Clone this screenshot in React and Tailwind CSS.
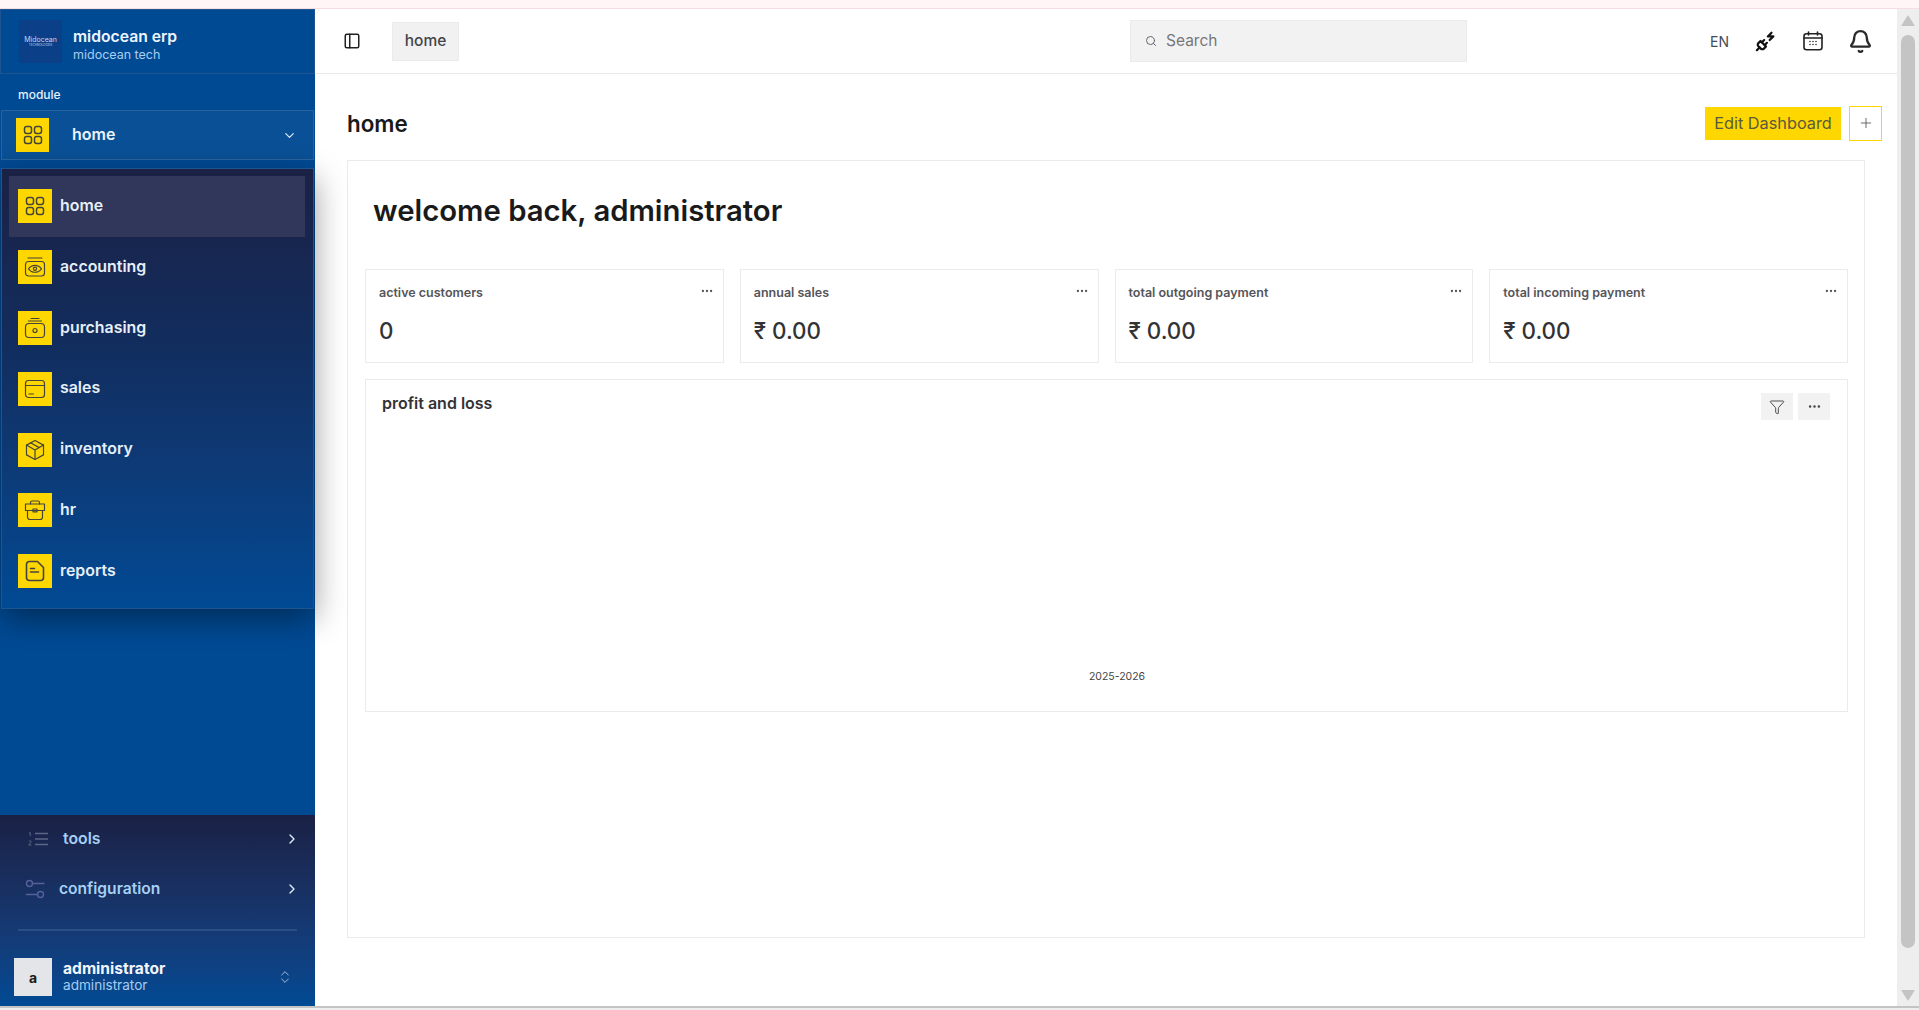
import { PanelLeft, ChevronDown, ChevronRight, ChevronsUpDown, Search, PlugZap, Bell, Plus, Funnel, Ellipsis } from "lucide-react";

const Svg = ({ className = "w-[24px] h-[24px]", children, sw = 1.5 }) => (
  <svg viewBox="0 0 24 24" className={className} fill="none" stroke="currentColor" strokeWidth={sw} strokeLinecap="round" strokeLinejoin="round">
    {children}
  </svg>
);

const HomeIcon = () => (
  <Svg>
    <rect x="3.500" y="3.500" width="7" height="7" rx="2.200" />
    <rect x="13.500" y="3.500" width="7" height="7" rx="2.200" />
    <rect x="3.500" y="13.500" width="7" height="7" rx="2.200" />
    <rect x="13.500" y="13.500" width="7" height="7" rx="2.200" />
  </Svg>
);

const AccountingIcon = () => (
  <Svg sw={1.200}>
    <rect x="2.500" y="6.500" width="19" height="14.500" rx="3" />
    <path d="M5 3h14" />
    <path d="M5.500 13.800c3.500-4.600 9.500-4.600 13 0-3.500 4.600-9.500 4.600-13 0z" />
    <circle cx="12" cy="13.800" r="1.600" />
  </Svg>
);

const PurchasingIcon = () => (
  <Svg sw={1.200}>
    <rect x="2.500" y="7.500" width="19" height="14" rx="3.500" />
    <path d="M8 2.500h8M5.500 5h13" />
    <circle cx="12" cy="14.500" r="2" />
  </Svg>
);

const SalesIcon = () => (
  <Svg sw={1.200}>
    <rect x="2.500" y="3.500" width="19" height="17" rx="3" />
    <path d="M2.500 8.500h19M6 17h4.500" />
  </Svg>
);

const InventoryIcon = () => (
  <Svg sw={1.200}>
    <path d="M12 2.500l8.500 4.600v9.800L12 21.500l-8.500-4.600V7.100z" />
    <path d="M3.500 7.100L12 12l8.500-5.100M12 12v9.500M7.500 4.800l8.800 4.800" />
  </Svg>
);

const HrIcon = () => (
  <Svg sw={1.200}>
    <path d="M2.500 6h19v6.500h-19zM4.500 12.500V19a2.500 2.500 0 0 0 2.500 2.500h10a2.500 2.500 0 0 0 2.500-2.500v-6.500" />
    <path d="M7.500 6V4.500a1.500 1.500 0 0 1 1.500-1.500h6a1.500 1.500 0 0 1 1.500 1.500V6" />
    <rect x="10" y="11" width="4" height="2.800" />
  </Svg>
);

const ReportsIcon = () => (
  <Svg sw={1.600}>
    <path d="M6.500 2.500h8l6 6v10a3 3 0 0 1-3 3h-11a3 3 0 0 1-3-3v-13a3 3 0 0 1 3-3z" />
    <path d="M7.500 9.500h4M7.500 13h8" />
  </Svg>
);

const ToolsIcon = () => (
  <svg viewBox="0 0 20 14" className="w-[20px] h-[14px]" fill="none" stroke="currentColor" strokeWidth="1.300">
    <path d="M7 1.500h13M7 7h13M7 12.500h13" />
    <path d="M1 1.200l1.200-.7v3.500M.8 9.500c.6-1 2.600-.8 2.400.5-.1.800-2.400 1.700-2.400 3h2.600" strokeWidth="1" />
  </svg>
);

const ConfigIcon = () => (
  <svg viewBox="0 0 20 20" className="w-[20px] h-[20px]" fill="none" stroke="currentColor" strokeWidth="1.400" strokeLinecap="round">
    <circle cx="4.500" cy="4.500" r="3" />
    <path d="M7.500 4.500H19" />
    <circle cx="15.500" cy="15.500" r="3" />
    <path d="M1.500 15.500h11" />
  </svg>
);

const CalendarIcon = () => (
  <svg viewBox="0 0 20 20" className="w-[20px] h-[20px]" fill="none" stroke="currentColor" strokeWidth="1.600" strokeLinecap="round" strokeLinejoin="round">
    <rect x="1" y="2.800" width="18" height="16" rx="2.500" />
    <path d="M1 7h18M5.500 1v3M14.500 1v3" />
    <path d="M7 10.500h.01M10 10.500h.01M13 10.500h.01M7 13.500h.01M10 13.500h.01M13 13.500h.01" strokeWidth="1.500" />
  </svg>
);

const modules = [
  { name: "home", Icon: HomeIcon, active: true },
  { name: "accounting", Icon: AccountingIcon },
  { name: "purchasing", Icon: PurchasingIcon },
  { name: "sales", Icon: SalesIcon },
  { name: "inventory", Icon: InventoryIcon },
  { name: "hr", Icon: HrIcon },
  { name: "reports", Icon: ReportsIcon },
];

const stats = [
  { label: "active customers", value: "0" },
  { label: "annual sales", value: "₹ 0.00" },
  { label: "total outgoing payment", value: "₹ 0.00" },
  { label: "total incoming payment", value: "₹ 0.00" },
];

function ModuleMenu() {
  return (
    <div className="absolute left-[1px] top-[159px] w-[313px] h-[441px] border border-[#1e5590] bg-gradient-to-b from-[#1a2145] via-[#112d5e] via-40% to-[#004a94] pl-[7px] pr-[8px] pt-[7px] shadow-[0_10px_30px_rgba(0,0,0,0.4)] z-10">
      {modules.map(({ name, Icon, active }) => (
        <div
          key={name}
          className={`flex items-center h-[60.800px] pl-[9px] gap-[8px] text-[15.900px] font-semibold text-[#e6effa] ${active ? "bg-[#30375a]" : ""}`}
        >
          <div className="w-[34px] h-[34px] bg-[#ffd700] flex items-center justify-center text-[#45453a]">
            <Icon />
          </div>
          <span className="mt-[-1px]">{name}</span>
        </div>
      ))}
    </div>
  );
}

function Sidebar() {
  return (
    <aside className="relative w-[315px] shrink-0 flex flex-col bg-[#004a94]">
      <div className="flex items-center h-[65px] pl-[18px] gap-[11px] border border-[#1e5590]">
        <div className="w-[43px] h-[43px] bg-[#0b3f87] flex flex-col items-center justify-center text-[#c5d6ee] leading-none">
          <span className="text-[7px]">Midocean</span>
          <span className="text-[3px] mt-[1px]">TECHNOLOGIES</span>
        </div>
        <div className="flex flex-col pt-[7px]">
          <span className="text-[15.700px] leading-[18px] font-semibold text-[#eef5ff]">midocean erp</span>
          <span className="text-[12.500px] leading-[17px] text-[#a8cdf2]">midocean tech</span>
        </div>
      </div>
      <div className="h-[36px] pl-[18px] pt-[13px] text-[12px] leading-[16px] font-medium text-[#e6f0fc]">module</div>
      <div className="mx-[1px] h-[50px] flex items-center pl-[14px] pr-[16px] border border-[#2a649f] bg-[#0a5096]">
        <div className="w-[33px] h-[34px] bg-[#ffd700] flex items-center justify-center text-[#45453a]">
          <HomeIcon />
        </div>
        <span className="ml-[23px] mt-[-3px] flex-1 text-[16px] font-semibold text-[#eaf2fc]">home</span>
        <ChevronDown className="w-[15px] h-[15px] text-[#dbe8f7]" />
      </div>
      <ModuleMenu />
      <div className="flex-1" />
      <div className="h-[191px] bg-gradient-to-b from-[#1a2145] to-[#004a94] flex flex-col">
        <div className="flex items-center h-[50px] mt-[-1px] pl-[28px] pr-[15px] text-[#a7d0f5] font-semibold text-[15.800px]">
          <span className="text-[#5b6685]"><ToolsIcon /></span>
          <span className="ml-[15px] flex-1">tools</span>
          <ChevronRight className="w-[16px] h-[16px] text-[#e3edf8]" />
        </div>
        <div className="flex items-center h-[50px] pl-[25px] pr-[15px] text-[#a7d0f5] font-semibold text-[15.600px]">
          <span className="text-[#55619b]"><ConfigIcon /></span>
          <span className="ml-[14px] flex-1">configuration</span>
          <ChevronRight className="w-[16px] h-[16px] text-[#e3edf8]" />
        </div>
        <div className="mx-[18px] mt-[15px] h-[2px] bg-[#2a4f84]" />
        <div className="flex items-center pl-[14px] pr-[22px] mt-[27px]">
          <div className="w-[38px] h-[38px] bg-[#e4e5e9] flex items-center justify-center text-[14px] font-bold text-[#1a1a1a]">a</div>
          <div className="ml-[11px] flex-1 flex flex-col mt-[-1px]">
            <span className="text-[15.600px] leading-[17px] font-bold text-[#f2f6fc]">administrator</span>
            <span className="text-[13.600px] leading-[16px] text-[#a4cdf3]">administrator</span>
          </div>
          <ChevronsUpDown className="w-[16px] h-[16px] text-[#b8cfe8]" strokeWidth={1.300} />
        </div>
      </div>
    </aside>
  );
}

function Topbar() {
  return (
    <header className="h-[65px] shrink-0 border-b border-[#e9e9e9] flex items-center pl-[28px] pr-[24px]">
      <PanelLeft className="w-[18px] h-[18px] text-[#222]" strokeWidth={2} />
      <div className="ml-[31px] w-[67px] h-[39px] bg-[#f1f1f1] border border-[#ebebeb] flex items-center justify-center text-[15.500px] font-medium text-[#44444a]">home</div>
      <div className="ml-[671px] w-[337px] h-[42px] bg-[#f2f2f2] border border-[#ebebeb] flex items-center pl-[14px] gap-[9px] text-[15.500px] text-[#77777a]">
        <Search className="w-[12px] h-[12px] text-[#666]" />
        Search
      </div>
      <div className="flex-1" />
      <span className="text-[14px] text-[#444c58] w-[18px] ml-[-1px]">EN</span>
      <PlugZap className="ml-[27px] w-[22px] h-[22px] text-[#111]" strokeWidth={2.400} />
      <span className="ml-[26px] text-[#222]"><CalendarIcon /></span>
      <Bell className="ml-[25px] w-[25px] h-[25px] text-[#2a2a2a]" strokeWidth={2.200} />
    </header>
  );
}

function StatCard({ label, value }) {
  return (
    <div className="flex-1 h-[94px] border border-[#ebebeb] pl-[13px] pr-[8px] pt-[14px] relative">
      <div className="text-[12.500px] leading-[18px] font-semibold text-[#55555a]">{label}</div>
      <div className="mt-[14px] text-[22.400px] leading-[30px] font-medium text-[#333336]">{value}</div>
      <Ellipsis className="absolute right-[9px] top-[14px] w-[14px] h-[14px] text-[#55555a]" />
    </div>
  );
}

function Content() {
  return (
    <div className="flex-1 pl-[32px] pr-[32px]">
      <div className="flex items-center justify-between h-[86px] pt-[12px]">
        <h1 className="text-[22.400px] mt-[2px] font-semibold text-[#1a1a1a]">home</h1>
        <div className="flex items-center gap-[8px] mr-[-17px]">
          <button className="w-[136px] h-[33px] bg-[#ffd700] text-[16.300px] text-[#5a5a40]">Edit Dashboard</button>
          <button className="w-[33px] h-[35px] border border-[#ffd700] flex items-center justify-center text-[#55555a]">
            <Plus className="w-[16px] h-[16px]" strokeWidth={1.300} />
          </button>
        </div>
      </div>
      <div className="h-[778px] border border-[#ebebeb] pl-[17px] pr-[16px]">
        <h2 className="pt-[30px] pl-[8px] h-[108px] text-[29.300px] leading-[40px] font-semibold text-[#1a1a1a]">welcome back, administrator</h2>
        <div className="flex gap-[16px]">
          {stats.map((s) => (
            <StatCard key={s.label} {...s} />
          ))}
        </div>
        <div className="relative mt-[16px] h-[333px] border border-[#ebebeb] pl-[16px] pt-[12px]">
          <div className="text-[16px] leading-[22px] font-semibold text-[#333336]">profit and loss</div>
          <div className="absolute right-[17px] top-[13px] flex gap-[5px]">
            <div className="w-[32px] h-[27px] bg-[#f2f2f2] flex items-center justify-center text-[#333]">
              <Funnel className="w-[16px] h-[16px] mr-[1px]" strokeWidth={1.300} />
            </div>
            <div className="w-[32px] h-[27px] bg-[#f2f2f2] flex items-center justify-center text-[#444]">
              <Ellipsis className="w-[15px] h-[15px]" />
            </div>
          </div>
          <div className="absolute left-[21px] right-0 top-[290px] text-center text-[10.500px] leading-[14px] text-[#444]">2025-2026</div>
        </div>
      </div>
    </div>
  );
}

function Scrollbar() {
  return (
    <div className="w-[22px] shrink-0 bg-[#eeeeee] flex flex-col items-center pt-[6px] pb-[5px]">
      <div className="w-0 h-0 border-x-[7px] border-x-transparent border-b-[11px] border-b-[#c4c4c4]" />
      <div className="mt-[9px] w-[14px] h-[913px] rounded-[7px] bg-[#c4c4c4]" />
      <div className="flex-1" />
      <div className="w-0 h-0 border-x-[7px] border-x-transparent border-t-[11px] border-t-[#c4c4c4]" />
    </div>
  );
}

export default function App() {
  return (
    <div className="w-full h-screen overflow-hidden flex flex-col bg-white font-['Inter',sans-serif]">
      <div className="h-[9px] shrink-0 bg-[#fff4f6] border-b border-[#f3dde2]" />
      <div className="flex-1 flex min-h-0">
        <Sidebar />
        <main className="flex-1 flex flex-col min-w-0">
          <Topbar />
          <Content />
        </main>
        <Scrollbar />
      </div>
      <div className="h-[4px] shrink-0 bg-[#eeeeee] border-t-2 border-[#c4c4c4]" />
    </div>
  );
}
